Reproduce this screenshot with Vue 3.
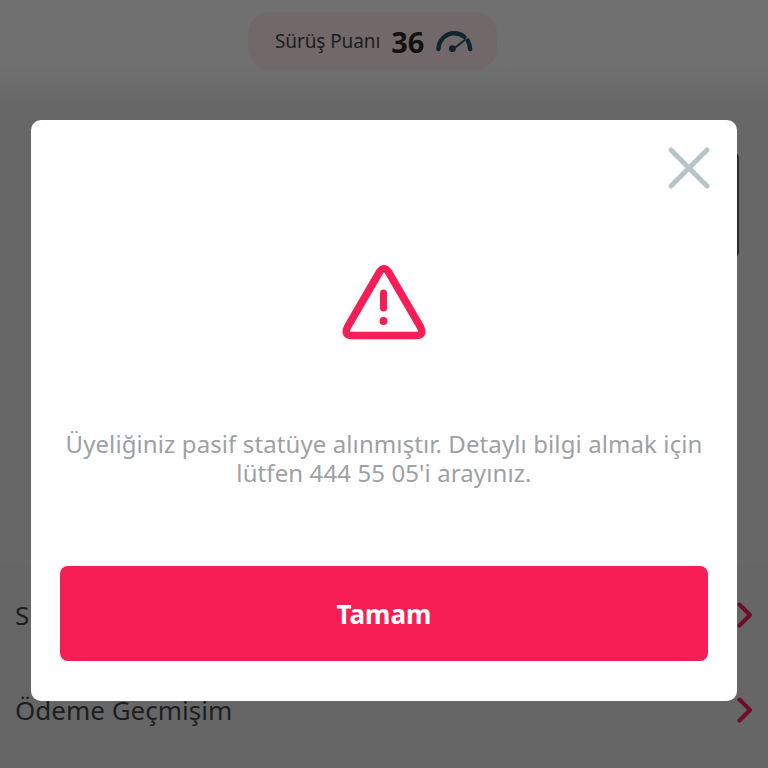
<script setup>
const rows = ['Sürüş Geçmişim', 'Ödeme Geçmişim']
</script>

<template>
  <div class="page">
    <header class="head">
      <div class="pill">
        <span class="pill-label">Sürüş Puanı</span>
        <b class="pill-num">36</b>
        <svg class="gauge" width="40" height="24" viewBox="0 0 40 24" fill="none">
          <path d="M3.500 20.500C4 11 11 4 20 4c4 0 7.500 1.300 10.500 3.800" stroke="#10252e" stroke-width="4.500" stroke-linecap="round" />
          <path d="M34 11.500c1.300 2.700 2.200 5.700 2.500 9" stroke="#10252e" stroke-width="4.500" stroke-linecap="round" />
          <path d="M20 19.500 31 11" stroke="#10252e" stroke-width="2" stroke-linecap="round" />
          <circle cx="18" cy="20" r="3.500" fill="#10252e" />
        </svg>
      </div>
    </header>
    <section class="middle">
      <div class="card-edge"></div>
    </section>
    <section class="list">
      <div v-for="r in rows" :key="r" class="row">
        <span>{{ r }}</span>
        <svg width="16" height="26" viewBox="0 0 16 26" fill="none">
          <path d="M2.500 2.500 13 13 2.500 23.500" stroke="#6f0c28" stroke-width="4" stroke-linecap="round" stroke-linejoin="round" />
        </svg>
      </div>
    </section>

    <div class="modal">
      <button class="close" aria-label="Kapat">
        <svg width="44" height="44" viewBox="0 0 44 44" fill="none">
          <path d="M4 4 40 40M40 4 4 40" stroke="#b7c3c6" stroke-width="5" stroke-linecap="round" />
        </svg>
      </button>
      <svg class="warn" width="84" height="76" viewBox="0 0 84 76" fill="none">
        <path d="M37.500 8Q42 1.500 46.500 8L78.500 63Q82.500 71.500 74 71.500H10Q1.500 71.500 5.500 63Z" stroke="#f71e55" stroke-width="7.500" stroke-linejoin="round" />
        <path d="M41.500 29V44" stroke="#f71e55" stroke-width="7" stroke-linecap="round" />
        <circle cx="41.500" cy="57" r="4" fill="#f71e55" />
      </svg>
      <p class="msg">Üyeliğiniz pasif statüye alınmıştır. Detaylı bilgi almak için<br />lütfen 444 55 05'i arayınız.</p>
      <button class="ok">Tamam</button>
    </div>
  </div>
</template>

<style scoped>
.page {
  position: relative;
  width: 768px;
  height: 768px;
  overflow: hidden;
  background: #666666;
  font-family: "Noto Sans", "Open Sans", sans-serif;
}
.head {
  height: 105px;
  background: linear-gradient(#707070 60%, #676767);
  padding: 12px 0 0 248px;
  box-sizing: border-box;
}
.pill {
  width: 249px;
  height: 58px;
  box-sizing: border-box;
  padding: 0 23px 0 27px;
  border-radius: 22px;
  background: #716969;
  display: flex;
  align-items: center;
  color: #1d1c1e;
  white-space: nowrap;
}
.pill-label {
  font-size: 19px;
  letter-spacing: -0.1px;
}
.pill-num {
  font-size: 29px;
  font-weight: 700;
  margin-left: 11px;
  color: #111;
}
.gauge {
  margin-left: 11px;
}
.middle {
  height: 460px;
  display: flex;
  justify-content: flex-end;
  align-items: flex-start;
  padding-top: 47px;
  padding-right: 29px;
  box-sizing: border-box;
  background: #666766;
}
.card-edge {
  width: 20px;
  height: 106px;
  background: #2c2c2c;
  border-radius: 0 6px 6px 0;
}
.list {
  height: 203px;
  padding-top: 2px;
  box-sizing: border-box;
}
.row {
  height: 95px;
  padding: 0 15px;
  display: flex;
  align-items: center;
  justify-content: space-between;
  font-size: 26px;
  color: #1d1e20;
}
.modal {
  position: absolute;
  left: 31px;
  top: 120px;
  width: 706px;
  height: 581px;
  box-sizing: border-box;
  padding: 144px 29px 40px;
  background: #fff;
  border-radius: 10px;
  display: flex;
  flex-direction: column;
  align-items: center;
}
.close {
  position: absolute;
  top: 26px;
  right: 26px;
  width: 44px;
  height: 44px;
  padding: 0;
  border: 0;
  background: none;
}
.warn {
  flex: none;
}
.msg {
  margin: 89px 0 0;
  font-size: 24px;
  line-height: 29px;
  text-align: center;
  color: #9ea1a4;
  white-space: nowrap;
  letter-spacing: 0.1px;
}
.ok {
  margin-top: auto;
  width: 648px;
  height: 95px;
  border: 0;
  border-radius: 8px;
  background: #f71e55;
  color: #fff;
  font-family: inherit;
  font-size: 26px;
  font-weight: 700;
}
</style>
